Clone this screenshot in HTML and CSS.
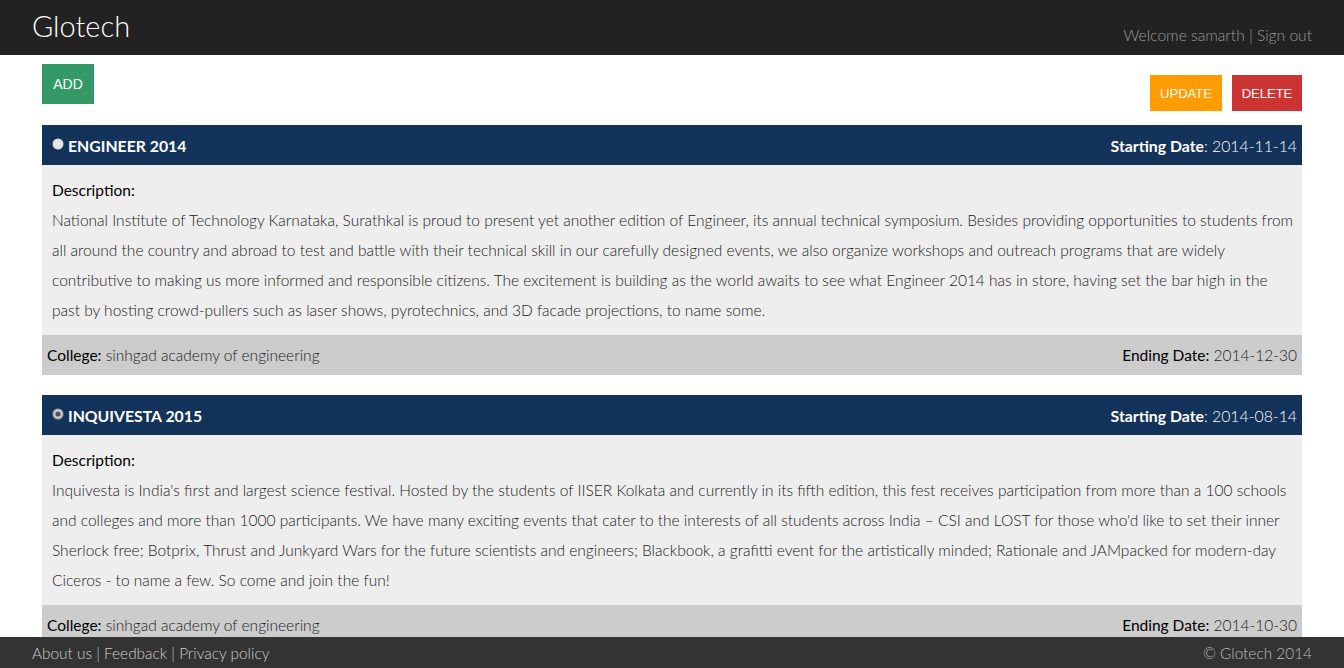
FILE: index.html
```html
<!DOCTYPE html>
<html>
<head>
<meta charset="utf-8">
<title>Glotech</title>
<link rel="stylesheet" href="styles.css">
</head>
<body>
<header class="topbar">
  <div class="logo">Glotech</div>
  <div class="welcome">Welcome samarth | Sign out</div>
</header>
<main class="content">
  <div class="toolbar">
    <button class="btn btn-add">ADD</button>
    <div class="actions">
      <button class="btn btn-update">UPDATE</button>
      <button class="btn btn-delete">DELETE</button>
    </div>
  </div>

  <section class="event">
    <div class="event-head">
      <div class="event-title">
        <svg class="radio" width="12" height="12" viewBox="0 0 12 12"><circle cx="6" cy="6" r="5.5" fill="#d9d9d9"/><circle cx="6" cy="6" r="4.5" fill="#e6e6e6"/></svg>
        <span>ENGINEER 2014</span>
      </div>
      <div class="event-date"><b>Starting Date</b>: 2014-11-14</div>
    </div>
    <div class="event-body">
      <div class="label">Description:</div>
      <p class="desc">National Institute of Technology Karnataka, Surathkal is proud to present yet another edition of Engineer, its annual technical symposium. Besides providing opportunities to students from all around the country and abroad to test and battle with their technical skill in our carefully designed events, we also organize workshops and outreach programs that are widely contributive to making us more informed and responsible citizens. The excitement is building as the world awaits to see what Engineer 2014 has in store, having set the bar high in the past by hosting crowd-pullers such as laser shows, pyrotechnics, and 3D facade projections, to name some.</p>
    </div>
    <div class="event-foot">
      <div><span class="label">College:</span> sinhgad academy of engineering</div>
      <div><span class="label">Ending Date:</span> 2014-12-30</div>
    </div>
  </section>

  <section class="event">
    <div class="event-head">
      <div class="event-title">
        <svg class="radio" width="12" height="12" viewBox="0 0 12 12"><circle cx="6" cy="6" r="5.5" fill="#a8a8a8"/><circle cx="6" cy="6" r="4.3" fill="#d0d0d0"/><circle cx="6" cy="6" r="2.6" fill="#555"/></svg>
        <span>INQUIVESTA 2015</span>
      </div>
      <div class="event-date"><b>Starting Date</b>: 2014-08-14</div>
    </div>
    <div class="event-body">
      <div class="label">Description:</div>
      <p class="desc">Inquivesta is India's first and largest science festival. Hosted by the students of IISER Kolkata and currently in its fifth edition, this fest receives participation from more than a 100 schools and colleges and more than 1000 participants. We have many exciting events that cater to the interests of all students across India – CSI and LOST for those who'd like to set their inner Sherlock free; Botprix, Thrust and Junkyard Wars for the future scientists and engineers; Blackbook, a grafitti event for the artistically minded; Rationale and JAMpacked for modern-day Ciceros - to name a few. So come and join the fun!</p>
    </div>
    <div class="event-foot">
      <div><span class="label">College:</span> sinhgad academy of engineering</div>
      <div><span class="label">Ending Date:</span> 2014-10-30</div>
    </div>
  </section>
</main>
<footer class="bottombar">
  <div class="links">About us | Feedback | Privacy policy</div>
  <div class="copy">© Glotech 2014</div>
</footer>
</body>
</html>
```
FILE: styles.css
```css
* { box-sizing: border-box; }
html, body { margin: 0; padding: 0; }
body {
  font-family: "Lato", "Open Sans", sans-serif;
  font-weight: 300;
  font-size: 15.5px;
  color: #222;
  background: #fff;
}
.topbar {
  height: 55px;
  background: #222;
  display: flex;
  justify-content: space-between;
  padding: 0 32px;
}
.logo {
  color: #fff;
  font-size: 29px;
  font-weight: 300;
  line-height: 30px;
  padding-top: 11px;
}
.welcome {
  align-self: flex-end;
  color: #999;
  font-size: 15.6px;
  line-height: 20px;
  padding-bottom: 10px;
}
.content {
  padding: 9px 42px 40px;
}
.toolbar {
  display: flex;
  justify-content: space-between;
  align-items: flex-start;
  margin-bottom: 14px;
}
.actions {
  display: flex;
  gap: 10px;
  margin-top: 11px;
}
.btn {
  border: none;
  color: #fff;
  font-family: "Liberation Sans", Arial, sans-serif;
  font-size: 13px;
  padding: 0;
  cursor: pointer;
}
.btn-add { background: #339966; width: 52px; height: 40px; font-size: 14px; }
.btn-update { background: #ff9c00; width: 72px; height: 36px; }
.btn-delete { background: #cc3333; width: 70px; height: 36px; }
.event { margin-bottom: 20px; }
.event-head {
  height: 40px;
  background: #13335a;
  color: #fff;
  display: flex;
  justify-content: space-between;
  align-items: center;
  padding: 0 5px 0 10px;
  font-size: 15.8px;
}
.event-title {
  display: flex;
  align-items: center;
  gap: 4px;
  font-weight: 700;
}
.radio { display: block; margin-top: -2px; }
.event-date b { font-weight: 700; }
.event-body {
  background: #eee;
  padding: 10px 3px 10px 10px;
  line-height: 30px;
}
.label { color: #000; font-weight: 400; }
.desc { margin: 0; }
.event-foot {
  height: 40px;
  background: #ccc;
  display: flex;
  justify-content: space-between;
  align-items: center;
  padding: 0 5px;
}
.bottombar {
  position: fixed;
  left: 0; right: 0; bottom: 0;
  height: 31px;
  background: #333;
  display: flex;
  justify-content: space-between;
  align-items: center;
  padding: 0 32px;
  color: #ccc;
  font-size: 15.4px;
}
.copy { color: #bbb; }
```
